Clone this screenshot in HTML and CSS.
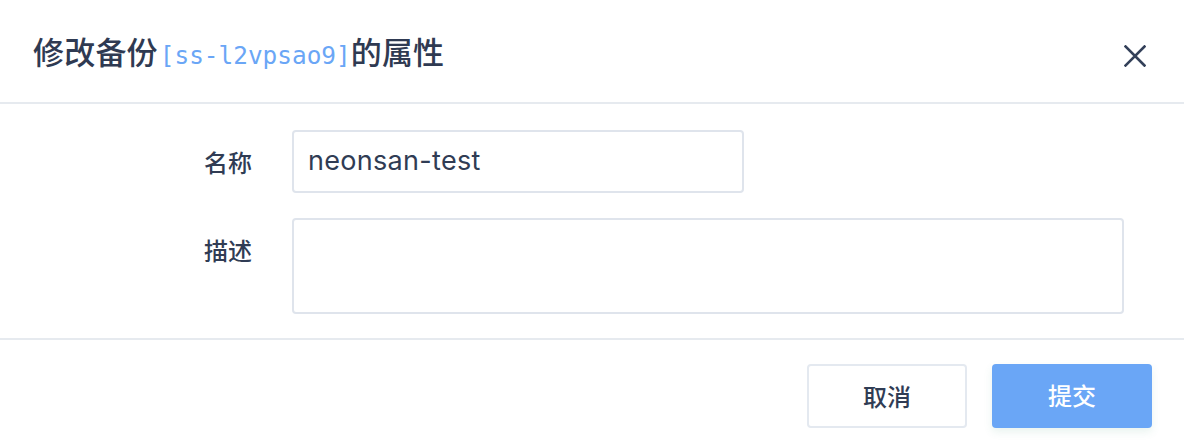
FILE: index.html
```html
<!DOCTYPE html>
<html lang="zh">
<head>
<meta charset="utf-8">
<title>修改备份属性</title>
<link rel="stylesheet" href="styles.css">
</head>
<body>
<div class="modal">
  <div class="modal-header">
    <h2 class="modal-title">修改备份<span class="res-id">[ss-l2vpsao9]</span>的属性</h2>
    <button class="close-btn" aria-label="关闭">
      <svg width="22" height="22" viewBox="0 0 22 22"><path d="M1.5 1.5 L20.5 20.5 M20.5 1.5 L1.5 20.5" stroke="#334059" stroke-width="2.6" stroke-linecap="square" fill="none"/></svg>
    </button>
  </div>
  <div class="modal-body">
    <div class="form-row">
      <label class="form-label">名称</label>
      <div class="input input-name">neonsan-test</div>
    </div>
    <div class="form-row">
      <label class="form-label">描述</label>
      <div class="input textarea"></div>
    </div>
  </div>
  <div class="modal-footer">
    <button class="btn btn-default">取消</button>
    <button class="btn btn-primary">提交</button>
  </div>
</div>
</body>
</html>
```

FILE: styles.css
```css
html, body {
  margin: 0;
  padding: 0;
  background: #ffffff;
}
body {
  font-family: "Noto Sans CJK SC", "Noto Sans", sans-serif;
  color: #303c54;
  width: 1184px;
  height: 440px;
  overflow: hidden;
}
.modal {
  display: flex;
  flex-direction: column;
}
.modal-header {
  height: 102px;
  border-bottom: 2px solid #e6eaef;
  display: flex;
  align-items: center;
  justify-content: space-between;
  padding: 0 38px 0 33px;
}
.modal-title {
  margin: 0;
  font-size: 31px;
  font-weight: 500;
  color: #2f3a52;
  letter-spacing: 0.2px;
  padding-bottom: 2px;
}
.res-id {
  font-family: "DejaVu Sans Mono", monospace;
  font-weight: 400;
  font-size: 24.4px;
  color: #6aa6f6;
  letter-spacing: 0;
  margin-left: 2px;
}
.close-btn {
  border: 0;
  background: none;
  padding: 0;
  width: 22px;
  height: 22px;
  margin-top: 10px;
  display: flex;
  cursor: pointer;
}
.modal-body {
  padding: 26px 60px 24px 0;
  border-bottom: 2px solid #e6eaef;
  display: flex;
  flex-direction: column;
  gap: 25px;
}
.form-row {
  display: flex;
  align-items: flex-start;
  gap: 40px;
}
.form-label {
  width: 252px;
  text-align: right;
  font-size: 24px;
  line-height: 63px;
  font-weight: 500;
  color: #303c54;
  flex-shrink: 0;
}
.input {
  box-sizing: border-box;
  border: 2px solid #dfe4ec;
  border-radius: 4px;
  font-family: "Inter", "Noto Sans", sans-serif;
  font-size: 27px;
  font-weight: 400;
  color: #303c54;
}
.input-name {
  width: 452px;
  height: 63px;
  padding: 0 14px;
  line-height: 57px;
  letter-spacing: 0.3px;
}
.textarea {
  flex: 1;
  height: 96px;
}
.modal-footer {
  display: flex;
  justify-content: flex-end;
  gap: 25px;
  padding: 24px 32px 0 0;
}
.btn {
  box-sizing: border-box;
  width: 160px;
  height: 64px;
  border-radius: 4px;
  font-family: "Noto Sans CJK SC", sans-serif;
  font-size: 24px;
  font-weight: 500;
  line-height: 60px;
  padding: 0 0 2px;
  cursor: pointer;
}
.btn-default {
  background: #ffffff;
  border: 2px solid #e4e9f0;
  color: #303c54;
}
.btn-primary {
  background: #6aa6f6;
  border: 0;
  color: #ffffff;
  box-shadow: 0 4px 8px rgba(74, 160, 120, 0.12);
}
```
